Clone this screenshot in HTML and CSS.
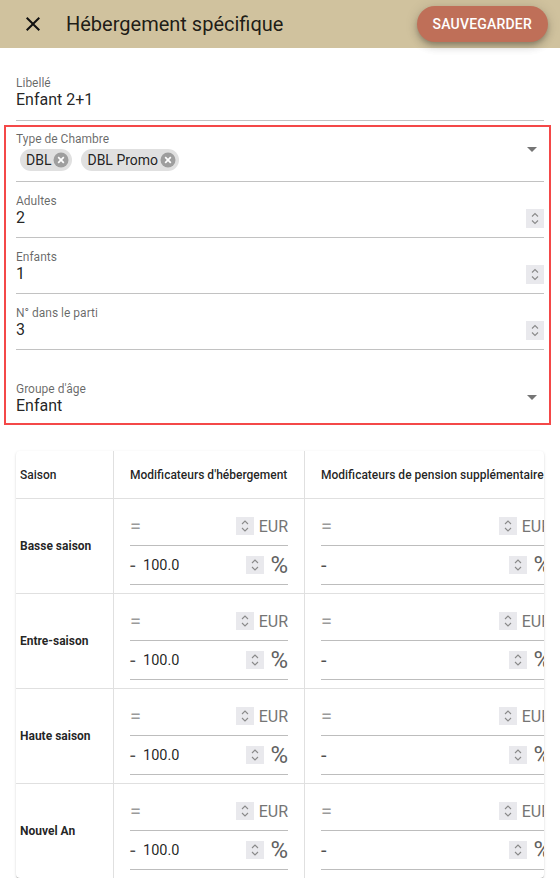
FILE: index.html
```html
<!DOCTYPE html>
<html lang="fr">
<head>
<meta charset="utf-8">
<title>Hébergement spécifique</title>
<link rel="stylesheet" href="styles.css">
</head>
<body>
<header class="topbar">
  <button class="close-btn" aria-label="Fermer">
    <svg width="24" height="24" viewBox="0 0 24 24"><path d="M19 6.41L17.59 5 12 10.59 6.41 5 5 6.41 10.59 12 5 17.59 6.41 19 12 13.41 17.59 19 19 17.59 13.41 12z" fill="#111"/></svg>
  </button>
  <h1 class="title">Hébergement spécifique</h1>
  <button class="save-btn">SAUVEGARDER</button>
</header>

<main class="form">
  <div class="field field-first">
    <div class="field-main">
      <div class="label">Libellé</div>
      <div class="value">Enfant 2+1</div>
    </div>
  </div>

  <div class="highlight">
    <div class="field field-chips">
      <div class="field-main">
        <div class="label">Type de Chambre</div>
        <div class="chips">
          <span class="chip">DBL<svg class="chip-x" width="16" height="16" viewBox="0 0 16 16"><circle cx="8" cy="8" r="7.5" fill="#9e9e9e"/><path d="M5.2 5.2l5.6 5.6M10.8 5.2l-5.6 5.6" stroke="#fff" stroke-width="1.7"/></svg></span>
          <span class="chip">DBL Promo<svg class="chip-x" width="16" height="16" viewBox="0 0 16 16"><circle cx="8" cy="8" r="7.5" fill="#9e9e9e"/><path d="M5.2 5.2l5.6 5.6M10.8 5.2l-5.6 5.6" stroke="#fff" stroke-width="1.7"/></svg></span>
        </div>
      </div>
      <svg class="arrow" width="10" height="5" viewBox="0 0 10 5"><path d="M0 0l5 5 5-5z" fill="#757575"/></svg>
    </div>

    <div class="field">
      <div class="field-main">
        <div class="label">Adultes</div>
        <div class="value-row"><span class="value">2</span><span class="spin"><svg width="18" height="19" viewBox="0 0 18 19"><path d="M6 7.5l3-3 3 3M6 11.5l3 3 3-3" stroke="#8a8a8a" stroke-width="1.1" fill="none"/></svg></span></div>
      </div>
    </div>

    <div class="field">
      <div class="field-main">
        <div class="label">Enfants</div>
        <div class="value-row"><span class="value">1</span><span class="spin"><svg width="18" height="19" viewBox="0 0 18 19"><path d="M6 7.5l3-3 3 3M6 11.5l3 3 3-3" stroke="#8a8a8a" stroke-width="1.1" fill="none"/></svg></span></div>
      </div>
    </div>

    <div class="field">
      <div class="field-main">
        <div class="label">N° dans le parti</div>
        <div class="value-row"><span class="value">3</span><span class="spin"><svg width="18" height="19" viewBox="0 0 18 19"><path d="M6 7.5l3-3 3 3M6 11.5l3 3 3-3" stroke="#8a8a8a" stroke-width="1.1" fill="none"/></svg></span></div>
      </div>
    </div>

    <div class="field field-last">
      <div class="field-main">
        <div class="label">Groupe d'âge</div>
        <div class="value">Enfant</div>
      </div>
      <svg class="arrow" width="10" height="5" viewBox="0 0 10 5"><path d="M0 0l5 5 5-5z" fill="#757575"/></svg>
    </div>
  </div>

  <div class="card">
    <table class="seasons">
      <thead>
        <tr>
          <th class="c1">Saison</th>
          <th class="c2">Modificateurs d'hébergement</th>
          <th class="c3">Modificateurs de pension supplémentaire</th>
        </tr>
      </thead>
      <tbody>
        <tr>
          <td class="season">Basse saison</td>
          <td class="mods">
            <div class="inp"><span class="pre">=</span><span class="val"></span><span class="spin"><svg width="18" height="18" viewBox="0 0 18 18"><path d="M6 7l3-3 3 3M6 11l3 3 3-3" stroke="#8a8a8a" stroke-width="1.1" fill="none"/></svg></span><span class="suf">EUR</span></div>
            <div class="inp"><span class="pre dark">-</span><span class="val">100.0</span><span class="spin"><svg width="18" height="18" viewBox="0 0 18 18"><path d="M6 7l3-3 3 3M6 11l3 3 3-3" stroke="#8a8a8a" stroke-width="1.1" fill="none"/></svg></span><span class="suf pct">%</span></div>
          </td>
          <td class="mods last">
            <div class="inp"><span class="pre">=</span><span class="val"></span><span class="spin"><svg width="18" height="18" viewBox="0 0 18 18"><path d="M6 7l3-3 3 3M6 11l3 3 3-3" stroke="#8a8a8a" stroke-width="1.1" fill="none"/></svg></span><span class="suf">EUR</span></div>
            <div class="inp"><span class="pre dark">-</span><span class="val"></span><span class="spin"><svg width="18" height="18" viewBox="0 0 18 18"><path d="M6 7l3-3 3 3M6 11l3 3 3-3" stroke="#8a8a8a" stroke-width="1.1" fill="none"/></svg></span><span class="suf pct">%</span></div>
          </td>
        </tr>
        <tr>
          <td class="season">Entre-saison</td>
          <td class="mods">
            <div class="inp"><span class="pre">=</span><span class="val"></span><span class="spin"><svg width="18" height="18" viewBox="0 0 18 18"><path d="M6 7l3-3 3 3M6 11l3 3 3-3" stroke="#8a8a8a" stroke-width="1.1" fill="none"/></svg></span><span class="suf">EUR</span></div>
            <div class="inp"><span class="pre dark">-</span><span class="val">100.0</span><span class="spin"><svg width="18" height="18" viewBox="0 0 18 18"><path d="M6 7l3-3 3 3M6 11l3 3 3-3" stroke="#8a8a8a" stroke-width="1.1" fill="none"/></svg></span><span class="suf pct">%</span></div>
          </td>
          <td class="mods last">
            <div class="inp"><span class="pre">=</span><span class="val"></span><span class="spin"><svg width="18" height="18" viewBox="0 0 18 18"><path d="M6 7l3-3 3 3M6 11l3 3 3-3" stroke="#8a8a8a" stroke-width="1.1" fill="none"/></svg></span><span class="suf">EUR</span></div>
            <div class="inp"><span class="pre dark">-</span><span class="val"></span><span class="spin"><svg width="18" height="18" viewBox="0 0 18 18"><path d="M6 7l3-3 3 3M6 11l3 3 3-3" stroke="#8a8a8a" stroke-width="1.1" fill="none"/></svg></span><span class="suf pct">%</span></div>
          </td>
        </tr>
        <tr>
          <td class="season">Haute saison</td>
          <td class="mods">
            <div class="inp"><span class="pre">=</span><span class="val"></span><span class="spin"><svg width="18" height="18" viewBox="0 0 18 18"><path d="M6 7l3-3 3 3M6 11l3 3 3-3" stroke="#8a8a8a" stroke-width="1.1" fill="none"/></svg></span><span class="suf">EUR</span></div>
            <div class="inp"><span class="pre dark">-</span><span class="val">100.0</span><span class="spin"><svg width="18" height="18" viewBox="0 0 18 18"><path d="M6 7l3-3 3 3M6 11l3 3 3-3" stroke="#8a8a8a" stroke-width="1.1" fill="none"/></svg></span><span class="suf pct">%</span></div>
          </td>
          <td class="mods last">
            <div class="inp"><span class="pre">=</span><span class="val"></span><span class="spin"><svg width="18" height="18" viewBox="0 0 18 18"><path d="M6 7l3-3 3 3M6 11l3 3 3-3" stroke="#8a8a8a" stroke-width="1.1" fill="none"/></svg></span><span class="suf">EUR</span></div>
            <div class="inp"><span class="pre dark">-</span><span class="val"></span><span class="spin"><svg width="18" height="18" viewBox="0 0 18 18"><path d="M6 7l3-3 3 3M6 11l3 3 3-3" stroke="#8a8a8a" stroke-width="1.1" fill="none"/></svg></span><span class="suf pct">%</span></div>
          </td>
        </tr>
        <tr>
          <td class="season">Nouvel An</td>
          <td class="mods">
            <div class="inp"><span class="pre">=</span><span class="val"></span><span class="spin"><svg width="18" height="18" viewBox="0 0 18 18"><path d="M6 7l3-3 3 3M6 11l3 3 3-3" stroke="#8a8a8a" stroke-width="1.1" fill="none"/></svg></span><span class="suf">EUR</span></div>
            <div class="inp"><span class="pre dark">-</span><span class="val">100.0</span><span class="spin"><svg width="18" height="18" viewBox="0 0 18 18"><path d="M6 7l3-3 3 3M6 11l3 3 3-3" stroke="#8a8a8a" stroke-width="1.1" fill="none"/></svg></span><span class="suf pct">%</span></div>
          </td>
          <td class="mods last">
            <div class="inp"><span class="pre">=</span><span class="val"></span><span class="spin"><svg width="18" height="18" viewBox="0 0 18 18"><path d="M6 7l3-3 3 3M6 11l3 3 3-3" stroke="#8a8a8a" stroke-width="1.1" fill="none"/></svg></span><span class="suf">EUR</span></div>
            <div class="inp"><span class="pre dark">-</span><span class="val"></span><span class="spin"><svg width="18" height="18" viewBox="0 0 18 18"><path d="M6 7l3-3 3 3M6 11l3 3 3-3" stroke="#8a8a8a" stroke-width="1.1" fill="none"/></svg></span><span class="suf pct">%</span></div>
          </td>
        </tr>
      </tbody>
    </table>
  </div>
</main>
</body>
</html>
```

FILE: styles.css
```css
* { box-sizing: border-box; }

html, body {
  margin: 0;
  padding: 0;
  background: #fff;
  font-family: Roboto, "Liberation Sans", Arial, sans-serif;
  color: rgba(0, 0, 0, 0.87);
}

.topbar {
  display: flex;
  align-items: center;
  height: 48px;
  padding: 0 12px 0 21px;
  background: #d0c29e;
}

.close-btn {
  display: flex;
  width: 24px;
  height: 24px;
  padding: 0;
  border: 0;
  background: none;
}

.title {
  flex: 1;
  margin: 0 0 0 21px;
  font-size: 20px;
  font-weight: 400;
  line-height: 24px;
  color: rgba(0, 0, 0, 0.87);
}

.save-btn {
  height: 36px;
  padding: 0 16px;
  border: 0;
  border-radius: 18px;
  background: #bf6f58;
  color: #fff;
  font-family: Roboto, "Liberation Sans", Arial, sans-serif;
  font-size: 14px;
  font-weight: 500;
  letter-spacing: 0.2px;
  box-shadow: 0 3px 5px -1px rgba(0, 0, 0, 0.2), 0 5px 8px 0 rgba(0, 0, 0, 0.14), 0 1px 14px 0 rgba(0, 0, 0, 0.12);
}

.form {
  padding: 28px 16px 0;
}

.field {
  display: flex;
  align-items: flex-start;
  padding: 12px 0 9px;
  border-bottom: 1px solid #c2c2c2;
}

.field-first {
  padding-top: 0;
  padding-bottom: 10px;
}

.field-main {
  flex: 1;
  min-width: 0;
}

.label {
  font-size: 12px;
  line-height: 14px;
  color: rgba(0, 0, 0, 0.6);
}

.value {
  display: block;
  font-size: 16px;
  line-height: 20px;
  color: rgba(0, 0, 0, 0.87);
}

.value-row {
  display: flex;
  align-items: center;
  height: 20px;
}

.value-row .value {
  flex: 1;
}

.spin {
  display: flex;
  width: 18px;
  height: 19px;
  background: #e9e9ed;
}

.highlight {
  margin: 4px -7px 0 -12px;
  padding: 5px 5px 0 10px;
  border: 2px solid #f44848;
}

.highlight .field-chips {
  padding-top: 0;
  padding-bottom: 10px;
}

.chips {
  display: flex;
  gap: 9px;
  margin-top: 3px;
  padding-left: 4px;
}

.chip {
  display: inline-flex;
  align-items: center;
  height: 22px;
  padding: 0 3px 0 6px;
  border-radius: 11px;
  background: #e0e0e0;
  font-size: 14px;
  color: rgba(0, 0, 0, 0.87);
}

.chip-x {
  margin-left: 2px;
}

.arrow {
  margin: 15px 7px 0 0;
}

.field-last {
  padding-top: 32px;
  padding-bottom: 7px;
  border-bottom: 0;
}

.field-last .arrow {
  margin-top: 13px;
}

.card {
  margin-top: 26px;
  border-radius: 4px;
  overflow: hidden;
  background: #fff;
  box-shadow: 0 2px 1px -1px rgba(0, 0, 0, 0.2), 0 1px 1px 0 rgba(0, 0, 0, 0.14), 0 1px 3px 0 rgba(0, 0, 0, 0.12);
}

.seasons {
  width: 551px;
  table-layout: fixed;
  border-collapse: separate;
  border-spacing: 0;
}

.seasons th,
.seasons td {
  border-right: 1px solid #e0e0e0;
  border-bottom: 1px solid #e0e0e0;
  text-align: left;
  vertical-align: middle;
}

.seasons th {
  height: 48px;
  padding: 0 16px;
  font-size: 12px;
  font-weight: 500;
  white-space: nowrap;
  color: rgba(0, 0, 0, 0.87);
}

.seasons .c1 { width: 98px; padding: 0 4px; }
.seasons .c2 { width: 191px; }
.seasons .c3 { width: 262px; border-right: 0; }

.seasons tbody tr:last-child td {
  border-bottom: 0;
}

.season {
  padding: 0 4px;
  font-size: 12px;
  font-weight: 700;
}

.mods {
  padding: 8px 16px;
}

.mods.last {
  border-right: 0;
}

.inp {
  display: flex;
  align-items: center;
  height: 39px;
  border-bottom: 1px solid #bdbdbd;
  font-size: 16px;
  white-space: nowrap;
}

.pre {
  width: 13px;
  font-size: 20px;
  color: #9a9a9a;
}

.pre.dark {
  color: rgba(0, 0, 0, 0.7);
}

.val {
  flex: 1;
  font-size: 14.5px;
  color: rgba(0, 0, 0, 0.87);
}

.inp .spin {
  height: 18px;
}

.suf {
  margin-left: 5px;
  color: #757575;
}

.suf.pct {
  margin-left: 6px;
  font-size: 24px;
  color: #616161;
}
```
